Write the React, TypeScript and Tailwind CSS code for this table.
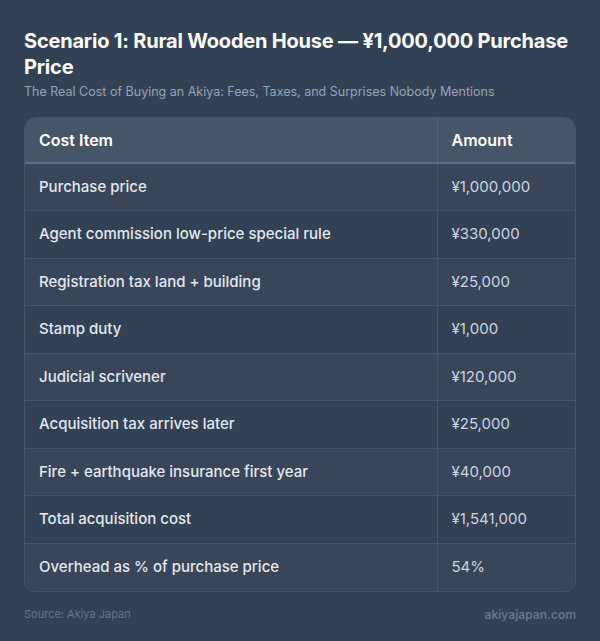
const rows: [string, string][] = [
  ['Purchase price', '¥1,000,000'],
  ['Agent commission low-price special rule', '¥330,000'],
  ['Registration tax land + building', '¥25,000'],
  ['Stamp duty', '¥1,000'],
  ['Judicial scrivener', '¥120,000'],
  ['Acquisition tax arrives later', '¥25,000'],
  ['Fire + earthquake insurance first year', '¥40,000'],
  ['Total acquisition cost', '¥1,541,000'],
  ['Overhead as % of purchase price', '54%'],
]

export default function App() {
  return (
    <div
      className="w-[600px] h-[641px] bg-[#334155] px-6 pt-[28px] text-white"
      style={{ fontFamily: 'Inter, "Liberation Sans", sans-serif' }}
    >
      <h1 className="text-[20px] font-bold leading-[26px] tracking-[-0.01em] text-white">
        Scenario 1: Rural Wooden House — ¥1,000,000 Purchase Price
      </h1>
      <p className="mt-[3px] text-[12.5px] leading-[18px] text-[#94a3b8]">
        The Real Cost of Buying an Akiya: Fees, Taxes, and Surprises Nobody Mentions
      </p>

      <div className="mt-[16px] rounded-[12px] border border-[#475569] overflow-hidden">
        <table className="w-full border-collapse">
          <thead>
            <tr className="bg-[#475569] border-b-2 border-[#5b6b80]">
              <th className="h-[45px] pl-[14px] text-left text-[16px] font-semibold text-white">Cost Item</th>
              <th className="w-[138px] pl-[14px] text-left text-[16px] font-semibold text-white border-l border-[#56657a]">
                Amount
              </th>
            </tr>
          </thead>
          <tbody>
            {rows.map(([label, amount], i) => (
              <tr
                key={label}
                className={`${i % 2 === 0 ? 'bg-[#394559]' : 'bg-[#334155]'} ${i > 0 ? 'border-t border-[#475569]' : ''}`}
              >
                <td className="h-[47.5px] pl-[14px] text-[15px] font-medium text-[#e2e8f0]">{label}</td>
                <td className="pl-[14px] text-[15px] text-[#cbd5e1] border-l border-[#475569]">{amount}</td>
              </tr>
            ))}
          </tbody>
        </table>
      </div>

      <div className="mt-[14px] flex items-center justify-between">
        <span className="text-[11px] text-[#64748b]">Source: Akiya Japan</span>
        <span className="text-[12px] font-semibold text-[#64748b]">akiyajapan.com</span>
      </div>
    </div>
  )
}
